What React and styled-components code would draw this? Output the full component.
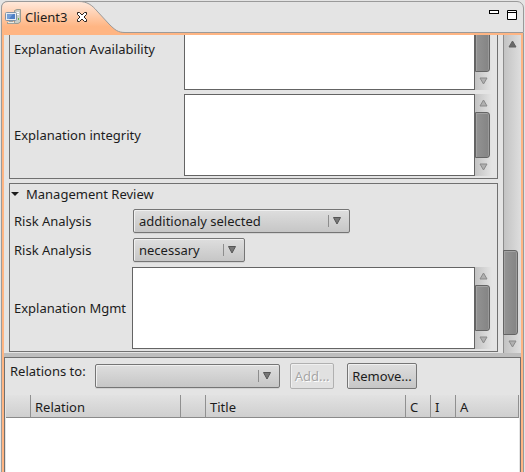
import React from "react";
import styled, { createGlobalStyle } from "styled-components";

const GlobalStyle = createGlobalStyle`
  * { box-sizing: border-box; }
  body {
    margin: 0;
    background: #e4e4e4;
    color: #1c1c1c;
    font: 13px/18px "Noto Sans", "Open Sans", sans-serif;
  }
  button, select, textarea { font: inherit; color: inherit; margin: 0; }
`;

const Frame = styled.main`
  height: 100vh;
  padding: 1px 1px 0;
  display: flex;
  flex-direction: column;
  overflow: hidden;
`;

const TabBar = styled.header`
  position: relative;
  flex: none;
  height: 32px;
  display: flex;
  align-items: center;
  justify-content: space-between;
  border: 1px solid #9a9a9a;
  border-radius: 7px 7px 0 0;
`;

const TabShape = styled.svg`
  position: absolute;
  left: -1px;
  top: -1px;
`;

const Tab = styled.div`
  position: relative;
  display: flex;
  align-items: center;
  padding-left: 3px;
`;

const TabTitle = styled.span`
  margin: 0 9px 0 4px;
`;

const IconButton = styled.button`
  display: flex;
  padding: 0;
  border: 0;
  background: none;
`;

const WindowButtons = styled.div`
  display: flex;
  align-items: flex-start;
  gap: 8px;
  padding: 0 6px 4px 0;
`;

const Body = styled.div`
  flex: 1;
  min-height: 0;
  display: flex;
  flex-direction: column;
  border: solid #ffb583;
  border-width: 2px 2px 0;
  box-shadow: -1px 0 #9a9a9a, 1px 0 #9a9a9a;
  margin: 0 1px;
`;

const FormPane = styled.section`
  flex: 1;
  min-height: 0;
  display: flex;
`;

const FormContent = styled.div`
  flex: 1;
  min-width: 0;
  display: flex;
  flex-direction: column;
  justify-content: flex-end;
  gap: 4px;
  overflow: hidden;
  padding: 0 5px 1px;
`;

const Group = styled.section`
  flex: none;
  border: 1px solid #707070;
  padding: 0 5px 2px 4px;
`;

const Fields = styled.div`
  display: grid;
  grid-template-columns: ${(p) => p.$label}px minmax(0, 1fr);
  row-gap: ${(p) => p.$gap}px;
  align-items: center;
`;

const GroupTitle = styled.button`
  display: flex;
  align-items: center;
  gap: 6px;
  height: 20px;
  margin-bottom: 5px;
  padding: 0;
  border: 0;
  background: none;
`;

const Label = styled.label`
  white-space: nowrap;
`;

const AreaBox = styled.div`
  display: flex;
  height: 82px;
`;

const Area = styled.textarea`
  flex: 1;
  min-width: 0;
  padding: 3px;
  resize: none;
  overflow: hidden;
  border: 1px solid #646464;
  border-radius: 0;
  background: #fff;
  outline: none;
`;

const Track = styled.div`
  flex: none;
  display: flex;
  flex-direction: column;
  width: ${(p) => (p.$wide ? 18 : 17)}px;
  border-left: ${(p) => (p.$wide ? "1px solid #8c8c8c" : "0")};
  background: linear-gradient(90deg, #c3c3c3, ${(p) => (p.$wide ? "#dedede" : "#e4e4e4")});
`;

const Arrow = styled.button`
  flex: none;
  display: flex;
  align-items: center;
  justify-content: center;
  height: 18px;
  padding: 0;
  border: 0;
  background: none;
`;

const Rail = styled.div`
  flex: 1;
  min-height: 0;
  display: flex;
  flex-direction: column;
  justify-content: flex-end;
`;

const Thumb = styled.div`
  width: 15px;
  margin-left: ${(p) => (p.$wide ? -1 : 0)}px;
  height: ${(p) => p.$size};
  border: 1px solid #646464;
  border-radius: 0 3px 3px 0;
  background: linear-gradient(90deg, #939393, #848484);
  box-shadow: inset 1px 1px #a2a2a2, inset -1px 0 #9a9a9a;
`;

const SelectBox = styled.div`
  position: relative;
  width: ${(p) => p.$width}px;
  margin-left: ${(p) => p.$inset || 0}px;
`;

const Select = styled.select`
  appearance: none;
  display: block;
  width: 100%;
  height: 24px;
  padding: 0 28px 0 5px;
  border: 1px solid #757575;
  border-radius: 2px;
  background: linear-gradient(#dedede, #c6c6c6);
  box-shadow: inset 1px 1px #f0f0f0, 0 1px #d2d2d2;
  outline: none;
`;

const SelectMark = styled.svg`
  position: absolute;
  right: 6px;
  top: 5px;
  pointer-events: none;
`;

const Sash = styled.div`
  flex: none;
  height: 4px;
  background: #bdbdbd;
`;

const RelationsPane = styled.section`
  flex: none;
  height: 115px;
  display: flex;
  flex-direction: column;
  border: solid #707070;
  border-width: 1px 1px 0;
  padding: 0 1px;
`;

const Toolbar = styled.div`
  flex: none;
  display: flex;
  align-items: center;
  height: 37px;
  padding: 0 0 1px 4px;
`;

const ToolbarLabel = styled.label`
  width: 85px;
  padding-bottom: 10px;
`;

const PushButton = styled.button`
  width: ${(p) => p.$width}px;
  height: 26px;
  margin-left: ${(p) => p.$gap}px;
  padding: 0;
  border: 1px solid #757575;
  border-radius: 2px;
  background: linear-gradient(#dedede, #c6c6c6);
  box-shadow: inset 1px 1px #f0f0f0;
  white-space: nowrap;

  &:disabled {
    color: #a6a6a6;
    border-color: #b0b0b0;
    background: #e1e1e1;
    text-shadow: 1px 1px #fff;
  }
`;

const TableArea = styled.div`
  flex: 1;
  background: #fff;
`;

const Table = styled.table`
  width: 100%;
  table-layout: fixed;
  border-collapse: separate;
  border-spacing: 0;
`;

const HeadCell = styled.th`
  width: ${(p) => (p.$width ? `${p.$width}px` : "auto")};
  height: 23px;
  padding: 2px 0 0 4px;
  text-align: left;
  font-weight: 400;
  line-height: 18px;
  border-right: 1px solid #909090;
  border-bottom: 1px solid #8a8a8a;
  background: linear-gradient(#e2e2e2, #cfcfcf);
`;

const columns = [
  { id: "icon", text: "", width: 25 },
  { id: "relation", text: "Relation", width: 150 },
  { id: "kind", text: "", width: 25 },
  { id: "title", text: "Title" },
  { id: "c", text: "C", width: 25 },
  { id: "i", text: "I", width: 25 },
  { id: "a", text: "A", width: 63 },
];

function Triangle({ up, dark }) {
  return (
    <svg width="9" height="8" viewBox="0 0 9 8">
      <path
        d={up ? "M4.5 1 8 7H1Z" : "M1 1H8L4.5 7Z"}
        fill={dark ? "#686868" : "#b0b0b0"}
        stroke={dark ? "#606060" : "#898989"}
      />
    </svg>
  );
}

function ScrollBar({ wide, size, upDark }) {
  return (
    <Track $wide={wide}>
      <Arrow aria-label="Scroll up"><Triangle up dark={upDark} /></Arrow>
      <Rail><Thumb $wide={wide} $size={size} /></Rail>
      <Arrow aria-label="Scroll down"><Triangle /></Arrow>
    </Track>
  );
}

function AreaField({ id, label }) {
  return (
    <>
      <Label htmlFor={id}>{label}</Label>
      <AreaBox>
        <Area id={id} />
        <ScrollBar size="100%" />
      </AreaBox>
    </>
  );
}

function Combo({ id, value, width, inset }) {
  return (
    <SelectBox $width={width} $inset={inset}>
      <Select id={id} defaultValue={value}>
        <option value={value}>{value}</option>
      </Select>
      <SelectMark width="16" height="14" viewBox="0 0 16 14">
        <path d="M.5 1V13" stroke="#8d8d8d" />
        <path d="M5.5 3.5H12.5L9 10Z" fill="#777" stroke="#555" />
      </SelectMark>
    </SelectBox>
  );
}

function ComputerIcon() {
  return (
    <svg width="16" height="16" viewBox="0 0 16 16">
      <path d="M9.5 1.5 12 .5H15.5V13L13 14.5H9.5Z" fill="#c9cec8" stroke="#989b93" />
      <path d="M11 3.5H14M11 5.5H14" stroke="#fff" />
      <path d="M13.5 9V11" stroke="#65b445" />
      <rect x=".5" y="3.5" width="11" height="8" rx="1" fill="#e7edf2" stroke="#8193a7" />
      <rect x="2" y="5" width="8" height="5" fill="#4d7fc5" />
      <path d="M2 5H8L4 10H2Z" fill="#769fd7" />
      <path d="M4 12H8V13H10V15H2V13H4Z" fill="#9da29f" />
      <path d="M3 13.5H9" stroke="#e9eae4" />
    </svg>
  );
}

export default function App() {
  return (
    <>
      <GlobalStyle />
      <Frame>
        <TabBar>
          <TabShape width="127" height="34" viewBox="0 0 127 34">
            <defs>
              <linearGradient id="tabFill" x1="0" y1="0" x2="0" y2="1">
                <stop offset="0" stopColor="#ffe9dc" />
                <stop offset=".75" stopColor="#ffb583" />
              </linearGradient>
            </defs>
            <path d="M.5 34V7Q.5 .5 7 .5H78C86 .5 91 4 96 10L108 23C114 29 117 31.5 124 31.5V34Z" fill="url(#tabFill)" />
            <path d="M.5 34V7Q.5 .5 7 .5H78C86 .5 91 4 96 10L108 23C114 29 117 31.5 124 31.5H127" fill="none" stroke="#9a9a9a" />
          </TabShape>
          <Tab>
            <ComputerIcon />
            <TabTitle>Client3</TabTitle>
            <IconButton aria-label="Close">
              <svg width="12" height="12" viewBox="0 0 12 12">
                <path d="M1.5 1.5H3.5L6 4 8.5 1.5H10.5V3.5L8 6 10.5 8.5V10.5H8.5L6 8 3.5 10.5H1.5V8.5L4 6 1.5 3.5Z" fill="#fff" stroke="#2b211c" />
              </svg>
            </IconButton>
          </Tab>
          <WindowButtons>
            <IconButton aria-label="Minimize">
              <svg width="10" height="4" viewBox="0 0 10 4">
                <rect x=".5" y=".5" width="9" height="3" fill="#fff" stroke="#000" />
              </svg>
            </IconButton>
            <IconButton aria-label="Maximize">
              <svg width="10" height="10" viewBox="0 0 10 10">
                <path d="M.5 .5H9.5V9.5H.5ZM.5 2.5H9.5" fill="#fff" stroke="#000" />
              </svg>
            </IconButton>
          </WindowButtons>
        </TabBar>
        <Body>
          <FormPane>
            <FormContent>
              <Group>
                <Fields $label={170} $gap={4}>
                  <AreaField id="availability" label="Explanation Availability" />
                  <AreaField id="integrity" label="Explanation integrity" />
                </Fields>
              </Group>
              <Group>
                <GroupTitle aria-expanded="true">
                  <svg width="6" height="8" viewBox="0 0 6 8" overflow="visible">
                    <path d="M-3 2H5L1 6Z" fill="#1c1c1c" />
                  </svg>
                  Management Review
                </GroupTitle>
                <Fields $label={118} $gap={5}>
                  <Label htmlFor="risk1">Risk Analysis</Label>
                  <Combo id="risk1" value="additionaly selected" width={217} inset={1} />
                  <Label htmlFor="risk2">Risk Analysis</Label>
                  <Combo id="risk2" value="necessary" width={112} inset={1} />
                  <AreaField id="mgmt" label="Explanation Mgmt" />
                </Fields>
              </Group>
            </FormContent>
            <ScrollBar wide size="30%" upDark />
          </FormPane>
          <Sash />
          <RelationsPane>
            <Toolbar>
              <ToolbarLabel htmlFor="relations">Relations to:</ToolbarLabel>
              <Combo id="relations" value="" width={185} />
              <PushButton $width={44} $gap={10} disabled>Add...</PushButton>
              <PushButton $width={70} $gap={13}>Remove...</PushButton>
            </Toolbar>
            <TableArea>
              <Table>
                <thead>
                  <tr>
                    {columns.map((c) => (
                      <HeadCell key={c.id} $width={c.width}>{c.text}</HeadCell>
                    ))}
                  </tr>
                </thead>
              </Table>
            </TableArea>
          </RelationsPane>
        </Body>
      </Frame>
    </>
  );
}
